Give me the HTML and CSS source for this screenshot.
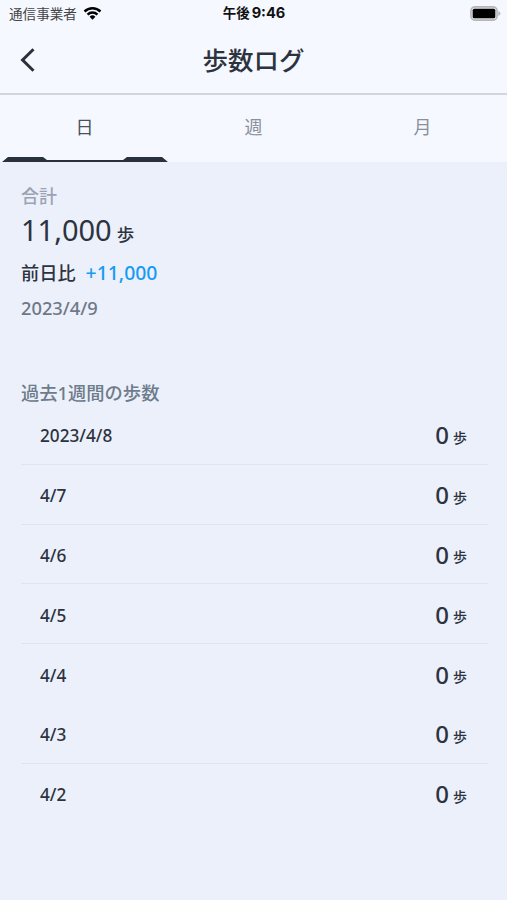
FILE: index.html
```html
<!DOCTYPE html>
<html lang="ja">
<head>
  <title>歩数ログ</title>
  <meta charset="UTF-8">
  <meta name="viewport" content="width=device-width, initial-scale=1">
  <link rel="stylesheet" href="styles.css">
</head>
<body>
  <div class="status-bar">
    <div class="carrier">
      <span>通信事業者</span>
      <svg class="wifi" viewBox="0 0 18 14">
        <path d="M0.2 4.6a12.6 12.6 0 0 1 17.6 0l-1.7 1.8a10.1 10.1 0 0 0-14.2 0z"/>
        <path d="M3.2 7.7a8.3 8.3 0 0 1 11.6 0l-1.7 1.8a5.8 5.8 0 0 0-8.2 0z"/>
        <path d="M6.1 10.7a4.1 4.1 0 0 1 5.8 0L9 13.7z"/>
      </svg>
    </div>
    <div class="clock">午後<span class="clock-time">9:46</span></div>
    <div class="battery-box">
      <svg class="battery" viewBox="0 0 31 15">
        <rect x="0.9" y="0.9" width="26.2" height="13.2" rx="4" fill="#e4e5e8" stroke="#b4b6ba" stroke-width="1.6"/>
        <rect x="2.7" y="2.7" width="22.6" height="9.6" rx="1.6"/>
        <path d="M28.4 5v5q2-.7 2-2.5t-2-2.5z" fill="#b4b6ba"/>
      </svg>
    </div>
  </div>

  <header class="header">
    <svg class="back" viewBox="0 0 16 24" fill="none" stroke="#2a313c" stroke-width="3">
      <path d="M13.5 1.3L2.6 12l10.9 10.7"/>
    </svg>
    <h1>歩数ログ</h1>
  </header>

  <nav class="tabs">
    <div class="tab active">日
      <svg class="tab-line" viewBox="0 0 166 5">
        <path d="M0 5L6 0H41L45 3H121L125 0H160L166 5z" fill="#29323c"/>
      </svg>
    </div>
    <div class="tab">週</div>
    <div class="tab">月</div>
  </nav>

  <main class="content">
    <section class="summary">
      <div class="total-label">合計</div>
      <div class="total"><span class="total-value">11,000</span><span class="total-unit">歩</span></div>
      <div class="compare"><span>前日比</span><span class="diff">+11,000</span></div>
      <div class="date">2023/4/9</div>
    </section>

    <h2>過去1週間の歩数</h2>
    <ul class="history">
      <li><span class="day">2023/4/8</span><span class="steps">0</span><span class="unit">歩</span></li>
      <li><span class="day">4/7</span><span class="steps">0</span><span class="unit">歩</span></li>
      <li><span class="day">4/6</span><span class="steps">0</span><span class="unit">歩</span></li>
      <li><span class="day">4/5</span><span class="steps">0</span><span class="unit">歩</span></li>
      <li class="no-line"><span class="day">4/4</span><span class="steps">0</span><span class="unit">歩</span></li>
      <li><span class="day">4/3</span><span class="steps">0</span><span class="unit">歩</span></li>
      <li class="no-line"><span class="day">4/2</span><span class="steps">0</span><span class="unit">歩</span></li>
    </ul>
  </main>
</body>
</html>
```

FILE: styles.css
```css
* {
  box-sizing: border-box;
}
body {
  margin: 0;
  min-height: 900px;
  background: #ebf0fb;
  color: #2d333e;
  font-family: "Noto Sans", "Noto Sans CJK JP", sans-serif;
}
.status-bar {
  display: grid;
  grid-template-columns: 1fr auto 1fr;
  align-items: center;
  height: 27px;
  padding: 0 8px 0 9px;
  background: #f5f8ff;
  color: #111;
}
.carrier {
  display: flex;
  align-items: center;
  gap: 6px;
  font-size: 13.6px;
  line-height: 26px;
  color: #444;
}
.wifi {
  width: 19px;
  height: 14px;
  margin-top: -2px;
  fill: #000;
}
.clock {
  font-size: 13.5px;
  font-weight: 700;
  line-height: 27px;
}
.clock-time {
  margin-left: 2px;
  font-family: Inter, sans-serif;
  font-size: 14.6px;
}
.battery-box {
  display: flex;
  justify-content: flex-end;
  margin: -1px -2px 0 0;
}
.battery {
  width: 31px;
  height: 15px;
}
.header {
  display: grid;
  grid-template-columns: 40px 1fr 40px;
  align-items: center;
  height: 68px;
  background: #f5f8ff;
  border-bottom: 2px solid #d1d5de;
}
.back {
  width: 16px;
  height: 24px;
  margin-left: 20px;
}
h1 {
  margin: 0;
  font-size: 25.5px;
  font-weight: 500;
  line-height: 36px;
  text-align: center;
}
.tabs {
  display: grid;
  grid-template-columns: repeat(3, 1fr);
  height: 67px;
  background: #f5f9ff;
}
.tab {
  position: relative;
  font-size: 18px;
  line-height: 64px;
  text-align: center;
  color: #8b8f9b;
}
.tab.active {
  color: #4b505c;
}
.tab-line {
  position: absolute;
  left: 2px;
  bottom: 0;
  width: 166px;
  height: 5px;
}
.content {
  padding: 20px 19px 0 21px;
}
.summary {
  height: 197px;
}
.total-label {
  font-size: 18px;
  font-weight: 500;
  line-height: 28px;
  color: #9ba3b3;
}
.total {
  display: flex;
  align-items: baseline;
  gap: 5px;
  height: 40px;
  line-height: 40px;
}
.total-value {
  font-size: 29px;
}
.total-unit {
  font-size: 17.5px;
  font-weight: 500;
}
.compare {
  display: flex;
  align-items: baseline;
  gap: 10px;
  height: 35px;
  margin-top: 5px;
  font-size: 18.2px;
  font-weight: 500;
  line-height: 36px;
}
.diff {
  font-size: 19.4px;
  color: #169bf3;
}
.date {
  font-size: 18.3px;
  font-weight: 500;
  line-height: 36px;
  color: #6e7887;
}
h2 {
  margin: 0;
  font-size: 18.3px;
  font-weight: 500;
  line-height: 28px;
  color: #6e7b8b;
}
.history {
  margin: -2px 0 0;
  padding: 0;
  list-style: none;
}
.history li {
  display: flex;
  align-items: center;
  height: 59.8px;
  padding: 2px 21px 0 19px;
  border-bottom: 1px solid #e0e4ed;
  line-height: 40px;
}
.history li.no-line {
  border-color: transparent;
}
.day {
  flex: 1;
  margin-top: 2px;
  font-size: 17.2px;
  font-weight: 500;
}
.steps {
  font-size: 24px;
  font-weight: 500;
}
.unit {
  margin: 5px 0 0 4px;
  font-size: 14px;
  font-weight: 500;
}
```
